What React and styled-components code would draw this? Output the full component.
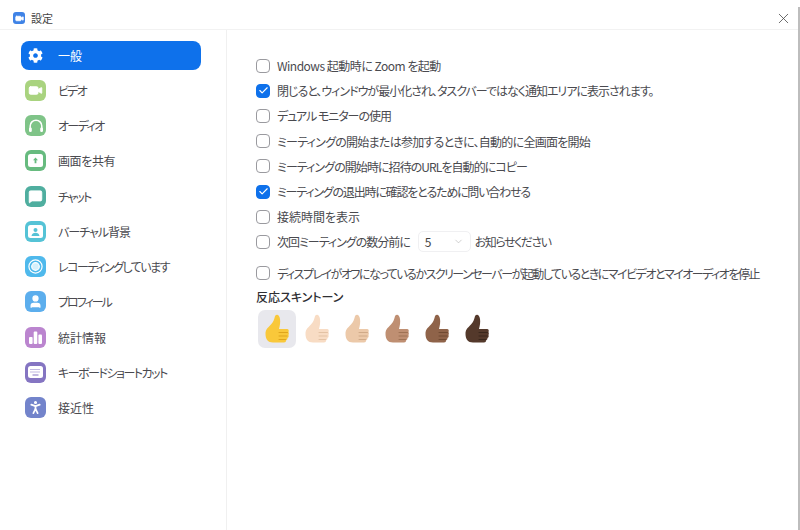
import React from 'react';
import styled, { createGlobalStyle } from 'styled-components';
import { FaCog } from 'react-icons/fa';
import { Video, MessageSquare, User, PersonStanding, ChevronDown, Check, X } from 'lucide-react';

const GlobalStyle = createGlobalStyle`
  html, body { margin: 0; padding: 0; background: #fff; }
  body {
    font-family: "Noto Sans CJK JP", "Noto Sans", sans-serif;
    font-feature-settings: "palt";
    color: #3d3d42;
  }
`;

const Page = styled.div`
  position: relative;
  width: 800px;
  height: 530px;
  display: flex;
  flex-direction: column;
  overflow: hidden;

  /* window shadow edge on the right */
  &::after {
    content: '';
    position: absolute;
    top: 7px;
    right: 0;
    bottom: 0;
    width: 2px;
    background: #bdbdbd;
  }
`;

const TitleBar = styled.div`
  height: 30px;
  flex: none;
  display: flex;
  align-items: center;
  padding: 7px 8px 0 13px;
  gap: 6px;
  box-sizing: border-box;
  border-bottom: 1px solid #f2f2f2;
  font-size: 11px;
  color: #444;
`;

const AppIcon = styled.span`
  width: 12px;
  height: 12px;
  border-radius: 3px;
  background: #3f83e6;
  display: flex;
  align-items: center;
  justify-content: center;
`;

const CloseButton = styled.span`
  margin-left: auto;
  display: flex;
  color: #444;
`;

const Body = styled.div`
  flex: 1;
  display: flex;
  min-height: 0;
`;

const Sidebar = styled.nav`
  width: 227px;
  flex: none;
  box-sizing: border-box;
  border-right: 1px solid #f0f0f0;
  padding: 10.6px 25px 0 21px;
  display: flex;
  flex-direction: column;
  gap: 6.25px;
`;

const NavItem = styled.div`
  height: 29px;
  display: flex;
  align-items: center;
  padding-left: 4px;
  gap: 12px;
  font-size: 12px;
  white-space: nowrap;
  border-radius: 8px;
  letter-spacing: ${p => p.$track || 0}px;
  color: ${p => (p.$active ? '#fff' : '#4a4a4f')};
  background: ${p => (p.$active ? '#0e71eb' : 'transparent')};
`;

const NavIcon = styled.span`
  width: 21px;
  height: 21px;
  flex: none;
  border-radius: 6px;
  background: ${p => p.$bg || 'transparent'};
  color: #fff;
  display: flex;
  align-items: center;
  justify-content: center;
`;

const Content = styled.main`
  flex: 1;
  padding: 23px 0 0 29px;
`;

const Row = styled.label`
  height: 25.2px;
  display: flex;
  align-items: center;
  gap: 7px;
  font-size: 12px;
  white-space: nowrap;
  color: #4a4a4f;
  margin-bottom: ${p => (p.$gap ? '6px' : '0')};
`;

const Label = styled.span`
  letter-spacing: ${p => p.$track || 0}px;
`;

const CheckBox = styled.span`
  width: 14px;
  height: 14px;
  flex: none;
  border-radius: 4px;
  box-sizing: border-box;
  border: 1px solid ${p => (p.$checked ? '#0e71eb' : '#9a9a9f')};
  background: ${p => (p.$checked ? '#0e71eb' : '#fff')};
  color: #fff;
  display: flex;
  align-items: center;
  justify-content: center;
`;

const Select = styled.span`
  width: 53px;
  height: 21px;
  box-sizing: border-box;
  border: 1px solid #f0f0f2;
  border-radius: 5px;
  margin: 0 -3px 0 1px;
  padding: 0 6px;
  display: flex;
  align-items: center;
  justify-content: space-between;
  color: #444;
`;

const SectionTitle = styled.div`
  font-size: 12px;
  font-weight: 500;
  color: #2f2f33;
  line-height: 18px;
  margin-top: 2px;
`;

const Thumbs = styled.div`
  display: flex;
  margin: 4px 0 0 2px;
`;

const ThumbCell = styled.span`
  width: 38px;
  height: 38px;
  margin-right: 2px;
  border-radius: 7px;
  background: ${p => (p.$active ? '#e8e8ed' : 'transparent')};
  display: flex;
  align-items: center;
  justify-content: center;
`;

function HeadsetIcon() {
  return (
    <svg width="16" height="15" viewBox="0 0 16 15" fill="none">
      <path d="M2.2 11V8a5.800 5.800 0 0 1 11.600 0v3" stroke="#fff" strokeWidth="1.5" />
      <rect x="1" y="9.500" width="2.800" height="4.500" rx="1.200" fill="#fff" />
      <rect x="12.200" y="9.500" width="2.800" height="4.500" rx="1.200" fill="#fff" />
    </svg>
  );
}

function ScreenIcon() {
  return (
    <svg width="15" height="13" viewBox="0 0 15 13">
      <rect width="15" height="13" rx="2.5" fill="#fff" />
      <path d="M7.500 3.500 5 6.200h1.600v3h1.800v-3H10z" fill="#67bb7f" />
    </svg>
  );
}

function BackgroundIcon() {
  return (
    <svg width="15" height="13" viewBox="0 0 15 13">
      <rect width="15" height="13" rx="2.5" fill="#fff" />
      <circle cx="7.500" cy="5" r="2" fill="#55c3d6" />
      <path d="M3.500 11c.4-2.400 2-3.200 4-3.200s3.600.8 4 3.200z" fill="#55c3d6" />
    </svg>
  );
}

function RecordIcon() {
  return (
    <svg width="15" height="15" viewBox="0 0 15 15">
      <circle cx="7.500" cy="7.500" r="6.600" fill="none" stroke="#fff" strokeWidth="1.2" />
      <circle cx="7.500" cy="7.500" r="3.800" fill="#d6f0fb" stroke="#fff" strokeWidth="1.2" />
    </svg>
  );
}

function StatsIcon() {
  return (
    <svg width="15" height="13" viewBox="0 0 15 13" fill="#fff">
      <rect x="1" y="6" width="3.600" height="7" rx="1" />
      <rect x="5.700" y="0.500" width="3.600" height="12.500" rx="1" />
      <rect x="10.400" y="3.500" width="3.600" height="9.500" rx="1" />
    </svg>
  );
}

function KeysIcon() {
  return (
    <svg width="15" height="12" viewBox="0 0 15 12">
      <rect width="15" height="12" rx="2.500" fill="#fff" />
      <path d="M2.500 3.500h10M2.500 6h10" stroke="#8575c2" strokeWidth="1" strokeDasharray="1 1" />
      <path d="M4.500 9h6" stroke="#8575c2" strokeWidth="1" />
    </svg>
  );
}

function Thumb({ fill, line }) {
  return (
    <svg width="24" height="29" viewBox="0 0 24 29">
      <path
        d="M12 .8C10.500.8 10 2 9.500 4 8.500 7.500 7 9.500 4.500 12 2 14.500.5 16 .5 20c0 5 2.500 8.500 7.500 8.500h11c1.500 0 2-1 2-2 1-.5 1.500-1.300 1.500-2.500 1-.5 1.500-1.500 1-3 .5-1 .5-2 0-3 .5-1 .5-3-1.500-3h-8c1-4 1.500-7 1-10C14.700 2.500 13.500.8 12 .8z"
        fill={fill}
      />
      <path d="M14 18.500h8.500M14 22h8M14 25.500h6.500" stroke={line} strokeWidth="1" fill="none" strokeLinecap="round" />
    </svg>
  );
}

const navItems = [
  { label: '一般', icon: <FaCog size={15} color="#fff" />, active: true },
  { label: 'ビデオ', track: -1.8, bg: '#a9d37f', icon: <Video size={15} fill="#fff" strokeWidth={1.5} /> },
  { label: 'オーディオ', track: -1.6, bg: '#7fc488', icon: <HeadsetIcon /> },
  { label: '画面を共有', track: -0.4, bg: '#67bb7f', icon: <ScreenIcon /> },
  { label: 'チャット', track: -1.7, bg: '#4fae9f', icon: <MessageSquare size={15} fill="#fff" strokeWidth={1.5} /> },
  { label: 'バーチャル背景', track: -1, bg: '#55c3d6', icon: <BackgroundIcon /> },
  { label: 'レコーディングしています', track: -1.5, bg: '#4fb9ec', icon: <RecordIcon /> },
  { label: 'プロフィール', track: -2, bg: '#5caeed', icon: <User size={15} fill="#fff" strokeWidth={2} /> },
  { label: '統計情報', bg: '#bb85cf', icon: <StatsIcon /> },
  { label: 'キーボードショートカット', track: -1.5, bg: '#8575c2', icon: <KeysIcon /> },
  { label: '接近性', bg: '#7384cb', icon: <PersonStanding size={17} strokeWidth={2.4} /> },
];

const options = [
  { label: 'Windows 起動時に Zoom を起動', track: -0.5 },
  { label: '閉じると、ウィンドウが最小化され、タスクバーではなく通知エリアに表示されます。', track: -1, checked: true },
  { label: 'デュアル モニターの使用', track: -1.05 },
  { label: 'ミーティングの開始または参加するときに、自動的に全画面を開始', track: -0.74 },
  { label: 'ミーティングの開始時に招待のURLを自動的にコピー', track: -0.93 },
  { label: 'ミーティングの退出時に確認をとるために問い合わせる', track: -1.2, checked: true },
  { label: '接続時間を表示' },
];

const tones = [
  ['#f9c83a', '#dfa51c'],
  ['#f8dcc4', '#e3c2a4'],
  ['#ecc9a9', '#d0aa88'],
  ['#bf8f72', '#9f7254'],
  ['#8f6349', '#704a32'],
  ['#54392b', '#3a271c'],
];

export default function App() {
  return (
    <Page>
      <GlobalStyle />
      <TitleBar>
        <AppIcon>
          <Video size={9} color="#fff" fill="#fff" />
        </AppIcon>
        設定
        <CloseButton>
          <X size={17} strokeWidth={1.1} />
        </CloseButton>
      </TitleBar>
      <Body>
        <Sidebar>
          {navItems.map(item => (
            <NavItem key={item.label} $active={item.active} $track={item.track}>
              <NavIcon $bg={item.bg}>{item.icon}</NavIcon>
              {item.label}
            </NavItem>
          ))}
        </Sidebar>
        <Content>
          {options.map(o => (
            <Row key={o.label}>
              <CheckBox $checked={o.checked}>
                {o.checked && <Check size={11} strokeWidth={2.5} />}
              </CheckBox>
              <Label $track={o.track}>{o.label}</Label>
            </Row>
          ))}
          <Row $gap>
            <CheckBox />
            <Label $track={-1}>次回ミーティングの数分前に</Label>
            <Select>
              5
              <ChevronDown size={11} strokeWidth={1.2} color="#aaa" />
            </Select>
            <Label $track={-1.5}>お知らせください</Label>
          </Row>
          <Row>
            <CheckBox />
            <Label $track={-1.5}>ディスプレイがオフになっているかスクリーンセーバーが起動しているときにマイビデオとマイオーディオを停止</Label>
          </Row>
          <SectionTitle>反応スキントーン</SectionTitle>
          <Thumbs>
            {tones.map(([fill, line], i) => (
              <ThumbCell key={fill} $active={i === 0}>
                <Thumb fill={fill} line={line} />
              </ThumbCell>
            ))}
          </Thumbs>
        </Content>
      </Body>
    </Page>
  );
}
